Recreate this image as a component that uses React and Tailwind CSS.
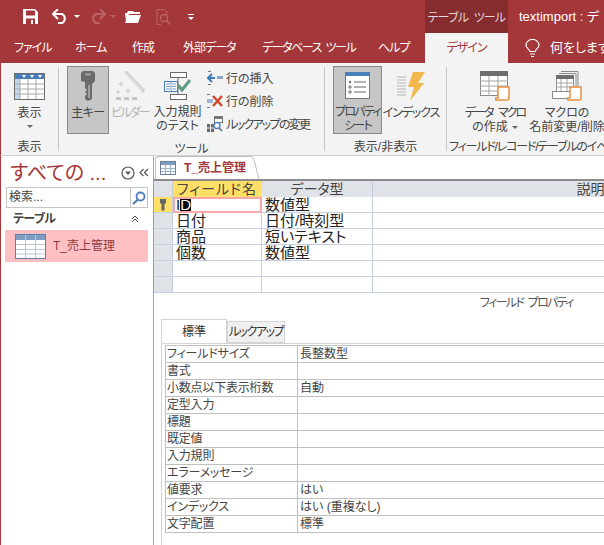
import React from 'react';

const fieldRows = [
  ['ID', '数値型'],
  ['日付', '日付/時刻型'],
  ['商品', '短いテキスト'],
  ['個数', '数値型'],
  ['', ''],
  ['', ''],
];

const propRows = [
  ['フィールドサイズ', '長整数型'],
  ['書式', ''],
  ['小数点以下表示桁数', '自動'],
  ['定型入力', ''],
  ['標題', ''],
  ['既定値', ''],
  ['入力規則', ''],
  ['エラーメッセージ', ''],
  ['値要求', 'はい'],
  ['インデックス', 'はい (重複なし)'],
  ['文字配置', '標準'],
];

const TableIcon = () => (
  <svg width="31" height="27" viewBox="0 0 31 27">
    <rect x="0.5" y="0.5" width="30" height="26" fill="#fff" stroke="#6d6d6d" />
    <rect x="1" y="1" width="29" height="5" fill="#4a7ebb" />
    <rect x="1" y="6" width="5" height="20" fill="#c5d7ee" />
    <path d="M6 6v20M14 6v20M22 6v20M1 11h29M1 16h29M1 21h29" stroke="#a9a9a9" fill="none" />
    <path d="M8 2h4l-2 3zM16 2h4l-2 3zM24 2h4l-2 3z" fill="#fff" />
  </svg>
);

const KeyIcon = () => (
  <svg width="16" height="30" viewBox="0 0 16 30">
    <path d="M3 0h10l2 2v8l-3 3v15l-4 2-3-2v-3l2-2-2-2 2-2-2-2v-6L1 10V2z" fill="#6a6a6a" />
    <rect x="5" y="2" width="6" height="2.5" fill="#9a9a9a" />
    <path d="M9 14v13" stroke="#b5b5b5" strokeWidth="1.5" />
  </svg>
);

const BuilderIcon = () => (
  <svg width="30" height="30" viewBox="0 0 30 30">
    <path d="M9 1l3-1 18 19-2 3z" fill="#c9c9c9" />
    <path d="M10 1l18 19" stroke="#dedede" strokeWidth="2" />
    <path d="M6 10l1 2 2 1-2 1-1 2-1-2-2-1 2-1zM13 17l1 2 2 1-2 1-1 2-1-2-2-1 2-1zM3 19l1 1 1 1-1 1-1 1-1-1-1-1 1-1z" fill="#d2d2d2" />
    <path d="M1 26h5v3H1zM9 26h5v3H9zM17 26h5v3h-5z" fill="#c4c4c4" />
  </svg>
);

const ValidationIcon = () => (
  <svg width="28" height="28" viewBox="0 0 28 28">
    <rect x="6.5" y="0.5" width="16" height="5" fill="#fff" stroke="#6a6a6a" />
    <rect x="6.5" y="22.5" width="16" height="5" fill="#fff" stroke="#6a6a6a" />
    <path d="M14 6v16" stroke="#6a6a6a" />
    <rect x="0.5" y="9.5" width="13" height="10" fill="#fff" stroke="#4a7ebb" />
    <path d="M7 10v9M2 12h4M2 14.500h4M2 17h4M8 12h4M8 14.500h4M8 17h4" stroke="#7c9cc4" />
    <path d="M14 13l4 5 8-10" fill="none" stroke="#5d9c85" strokeWidth="3" />
  </svg>
);

const InsertRowIcon = () => (
  <svg width="16" height="17" viewBox="0 0 16 17">
    <path d="M1 1h3v1H1zM1 14h3v1H1z" fill="#777" />
    <path d="M1 8h7" stroke="#3d78b8" strokeWidth="2" />
    <path d="M5 4L1 8l4 4" fill="none" stroke="#3d78b8" strokeWidth="2" />
    <rect x="10" y="6" width="6" height="3" fill="#8fa6c4" />
  </svg>
);

const DeleteRowIcon = () => (
  <svg width="16" height="17" viewBox="0 0 16 17">
    <path d="M0 1h3v1H0zM0 14h3v1H0z" fill="#777" />
    <rect x="0" y="6" width="6" height="4" fill="#9db5d6" />
    <path d="M6 3l9 10M15 3L6 13" stroke="#d24726" strokeWidth="2.400" />
  </svg>
);

const LookupIcon = () => (
  <svg width="16" height="17" viewBox="0 0 16 17">
    <rect x="7.500" y="0.500" width="8" height="6" fill="#fff" stroke="#777" />
    <rect x="8" y="1" width="7" height="2" fill="#777" />
    <rect x="0" y="8" width="7" height="8" fill="#6a6a6a" />
    <path d="M0 12h7M3.500 8v8" stroke="#eee" />
    <circle cx="10" cy="9.500" r="3" fill="#fff" stroke="#4a7ebb" strokeWidth="1.300" />
    <path d="M12 12l3 3" stroke="#666" strokeWidth="1.600" />
  </svg>
);

const PropertySheetIcon = () => (
  <svg width="25" height="27" viewBox="0 0 25 27">
    <rect x="0.500" y="0.500" width="24" height="26" fill="#fff" stroke="#777" />
    <rect x="0" y="0" width="25" height="4" fill="#4a7ebb" />
    <circle cx="5" cy="10" r="1.200" fill="#666" />
    <circle cx="5" cy="15" r="1.200" fill="none" stroke="#666" />
    <circle cx="5" cy="20" r="1.200" fill="none" stroke="#666" />
    <path d="M9 10h12M9 15h12M9 20h12" stroke="#666" />
  </svg>
);

const IndexIcon = () => (
  <svg width="28" height="29" viewBox="0 0 28 29">
    <path d="M0 5h9M0 8h9M0 11h9M0 14h9M0 17h9M0 20h9M0 23h9" stroke="#b5b5b5" />
    <path d="M16 0h12l-7 11h6L13 29l4-14h-6z" fill="#f2b84b" />
  </svg>
);

const MacroBadge = () => (
  <svg className="absolute right-0 bottom-0" width="15" height="15" viewBox="0 0 15 15">
    <path d="M3 1h11v11a2 2 0 0 1-2 2H1a2 2 0 0 1-1-2h3z" fill="#fff" stroke="#e8913f" strokeWidth="1.500" />
  </svg>
);

const DataMacroIcon = () => (
  <div className="relative w-[30px] h-[30px]">
    <svg width="30" height="28" viewBox="0 0 30 28">
      <rect x="0.500" y="0.500" width="27" height="24" fill="#fff" stroke="#8a8a8a" />
      <rect x="0" y="0" width="28" height="5" fill="#6f6f6f" />
      <path d="M9 5v20M18 5v20M0 10h28M0 15h28M0 20h28" stroke="#a5a5a5" />
    </svg>
    <MacroBadge />
  </div>
);

const RenameMacroIcon = () => (
  <div className="relative w-[30px] h-[30px]">
    <svg width="30" height="28" viewBox="0 0 30 28">
      <path d="M9 .5h17v20M7 2.500h17v20" fill="none" stroke="#8a8a8a" />
      <rect x="4.500" y="4.500" width="17" height="16" fill="#fff" stroke="#8a8a8a" />
      <rect x="4" y="4" width="18" height="4" fill="#6f6f6f" />
      <path d="M9 8v12M15 8v12M4 12h18M4 16h18" stroke="#a5a5a5" />
      <rect x="0.500" y="20.500" width="24" height="7" fill="#fff" stroke="#8a8a8a" />
    </svg>
    <MacroBadge />
  </div>
);

const Caret = ({ className = 'border-t-[#666]' }) => (
  <div className={`w-0 h-0 border-x-[3px] border-t-[3px] border-x-transparent ${className}`} />
);

const RibbonButton = ({ icon, lines, width, active, disabled, caret, labelClass = '' }) => (
  <div
    className={`flex flex-col items-center shrink-0 h-[68px] pt-[4px] border ${
      active ? 'bg-[#c6c6c6] border-[#8a8a8a]' : 'border-transparent'
    } ${disabled ? 'text-[#b1b1b1]' : 'text-[#444]'} ${width}`}
  >
    <div className="h-[30px] flex items-center justify-center">{icon}</div>
    <div className={`mt-[5px] text-center leading-[14px] whitespace-nowrap ${labelClass}`}>
      {lines.map((line, i) => (
        <div key={i}>{line}</div>
      ))}
    </div>
    {caret && <div className="mt-[5px]"><Caret /></div>}
  </div>
);

const CommandRow = ({ icon, label, labelClass = '' }) => (
  <div className="flex items-center h-[23px] gap-[3px] whitespace-nowrap text-[#444]">
    {icon}
    <span className={labelClass}>{label}</span>
  </div>
);

const GroupLabel = ({ children, className = '' }) => (
  <div className={`mt-[6px] h-[14px] leading-[14px] text-[#444] whitespace-nowrap ${className}`}>{children}</div>
);

const Separator = () => <div className="w-px my-[4px] bg-[#c6c6c6] shrink-0" />;

const TitleBar = () => (
  <div className="flex h-[33px] bg-[#a4373a] text-white">
    <div className="flex items-center w-[425px] shrink-0 pl-[23px]">
      <svg width="15" height="15" viewBox="0 0 15 15">
        <path d="M0 0h12l3 3v12H0z" fill="#fff" />
        <rect x="3" y="1.500" width="9" height="5" fill="#a4373a" />
        <rect x="3" y="9.500" width="9" height="5.500" fill="#a4373a" />
        <rect x="8" y="11" width="2" height="4" fill="#fff" />
      </svg>
      <svg className="ml-[14px]" width="18" height="15" viewBox="0 0 18 15">
        <path d="M1 5h9a5 5 0 0 1 0 9H6" fill="none" stroke="#fff" strokeWidth="2" />
        <path d="M6 0L1 5l5 5" fill="none" stroke="#fff" strokeWidth="2" />
      </svg>
      <div className="ml-[4px]"><Caret className="border-t-white" /></div>
      <svg className="ml-[8px]" width="18" height="15" viewBox="0 0 18 15">
        <path d="M17 5H8a5 5 0 0 0 0 9h4" fill="none" stroke="#bb6466" strokeWidth="2" />
        <path d="M12 0l5 5-5 5" fill="none" stroke="#bb6466" strokeWidth="2" />
      </svg>
      <div className="ml-[4px]"><Caret className="border-t-[#bb6466]" /></div>
      <svg className="ml-[9px]" width="16" height="13" viewBox="0 0 16 13">
        <path d="M0 3h2l1-2h5l1 1h6v2H4L1 11zM0 13l3-8h13l-3 8z" fill="#fff" />
      </svg>
      <svg className="ml-[15px]" width="16" height="16" viewBox="0 0 16 16">
        <path d="M1 .500h7l3 3v3M5 15.500H1V.500" fill="none" stroke="#bb6466" />
        <circle cx="8" cy="9" r="3.500" fill="none" stroke="#bb6466" strokeWidth="1.300" />
        <path d="M10.500 11.500l4 4" stroke="#bb6466" strokeWidth="1.600" />
      </svg>
      <div className="ml-[16px] flex flex-col items-center gap-[2px]">
        <div className="w-[6px] h-px bg-white" />
        <Caret className="border-t-white" />
      </div>
    </div>
    <div className="w-[83px] shrink-0 flex items-center justify-center bg-[#842c2e] text-[12px] tracking-[-0.8px] [word-spacing:3px] text-[#e8d5d5] pt-[3px] whitespace-nowrap">
      テーブル ツール
    </div>
    <div className="pl-[11px] flex items-center text-[13px] whitespace-nowrap">textimport : デ</div>
  </div>
);

const TabBar = () => (
  <div className="flex h-[30px] bg-[#a4373a] text-white text-[12px] items-stretch whitespace-nowrap">
    <div className="w-[425px] shrink-0 flex items-center pl-[14px] tracking-[-1px]">
      <span className="w-[61px] shrink-0">ファイル</span>
      <span className="w-[57px] shrink-0">ホーム</span>
      <span className="w-[51px] shrink-0">作成</span>
      <span className="w-[79px] shrink-0">外部データ</span>
      <span className="w-[116px] shrink-0 tracking-[-1.5px] [word-spacing:3px]">データベース ツール</span>
      <span>ヘルプ</span>
    </div>
    <div className="w-[83px] shrink-0 bg-[#f3f3f3] text-[#a4373a] flex items-center justify-center tracking-[-1px]">デザイン</div>
    <div className="flex items-center pl-[17px] gap-[10px]">
      <svg className="shrink-0" width="15" height="18" viewBox="0 0 15 18">
        <path d="M5 12.500C4 10 1 9 1 6a6.500 5.500 0 0 1 13 0c0 3-3 4-4 6.500zM5 15h5M6 17.500h3" fill="none" stroke="#fff" strokeWidth="1.200" />
      </svg>
      <span className="text-[13px]">何をしますか</span>
    </div>
  </div>
);

const Ribbon = () => (
  <div className="flex h-[93px] bg-[#f3f3f3] border-b border-[#d2d2d2] border-l border-l-[#a4373a] text-[12px] overflow-hidden">
    <div className="w-[57px] shrink-0 pt-[3px] flex flex-col items-center">
      <RibbonButton width="w-[50px]" icon={<TableIcon />} lines={['表示']} caret />
      <GroupLabel>表示</GroupLabel>
    </div>
    <Separator />
    <div className="w-[265px] shrink-0 pt-[3px] flex flex-col items-center">
      <div className="flex w-full pl-[8px]">
        <RibbonButton width="w-[42px]" active icon={<KeyIcon />} lines={['主キー']} labelClass="tracking-[-0.5px]" />
        <RibbonButton width="w-[42px]" disabled icon={<BuilderIcon />} lines={['ビルダー']} labelClass="tracking-[-1.8px]" />
        <RibbonButton width="w-[53px]" icon={<ValidationIcon />} lines={['入力規則', 'のテスト']} />
        <div className="ml-[3px] pt-[1px] flex flex-col">
          <CommandRow icon={<InsertRowIcon />} label="行の挿入" />
          <CommandRow icon={<DeleteRowIcon />} label="行の削除" />
          <CommandRow icon={<LookupIcon />} label="ルックアップの変更" labelClass="tracking-[-1.7px]" />
        </div>
      </div>
      <GroupLabel>ツール</GroupLabel>
    </div>
    <Separator />
    <div className="w-[121px] shrink-0 pt-[3px] flex flex-col items-center">
      <div className="flex w-full pl-[8px] gap-[2px]">
        <RibbonButton width="w-[49px]" active icon={<PropertySheetIcon />} lines={['プロパティ', 'シート']} labelClass="tracking-[-1.8px]" />
        <RibbonButton width="w-[54px]" icon={<IndexIcon />} lines={['インデックス']} labelClass="tracking-[-1.1px]" />
      </div>
      <GroupLabel>表示/非表示</GroupLabel>
    </div>
    <Separator />
    <div className="flex-1 min-w-0 pt-[3px] flex flex-col">
      <div className="flex pl-[17px] gap-[5px]">
        <RibbonButton
          width="w-[62px]"
          icon={<DataMacroIcon />}
          lines={[
            <span className="tracking-[-2px] [word-spacing:4px]">データ マクロ</span>,
            <span className="inline-flex items-center gap-[4px]">の作成<Caret /></span>,
          ]}
        />
        <RibbonButton width="w-[72px]" icon={<RenameMacroIcon />} lines={['マクロの', '名前変更/削除']} />
      </div>
      <GroupLabel className="pl-[2px] tracking-[-1.2px]">フィールド/レコード/テーブルのイベ</GroupLabel>
    </div>
  </div>
);

const Sidebar = () => (
  <div className="w-[153px] shrink-0 border-l border-[#a4373a] bg-white flex flex-col">
    <div className="h-[31px] flex items-center pl-[9px] pt-[2px]">
      <span className="text-[20px] leading-[24px] text-[#a4373a] whitespace-nowrap w-[111px]">すべての ...</span>
      <svg width="14" height="14" viewBox="0 0 14 14">
        <circle cx="7" cy="7" r="6" fill="none" stroke="#555" strokeWidth="1.200" />
        <path d="M4 5.500h6l-3 3.500z" fill="#555" />
      </svg>
      <svg className="ml-[4px]" width="10" height="9" viewBox="0 0 10 9">
        <path d="M4.500 1L1 4.500 4.500 8M9 1L5.500 4.500 9 8" fill="none" stroke="#555" strokeWidth="1.200" />
      </svg>
    </div>
    <div className="mx-[5px] h-[21px] flex border border-[#c6c6c6] text-[12px] text-[#444]">
      <div className="flex-1 pl-[2px] leading-[19px]">検索...</div>
      <div className="w-[17px] border-l border-[#c6c6c6] flex items-center justify-center">
        <svg width="14" height="14" viewBox="0 0 14 14">
          <circle cx="8.500" cy="5.500" r="4" fill="none" stroke="#4a7ebb" strokeWidth="1.800" />
          <path d="M6 8.500l-5 4.500" stroke="#4a7ebb" strokeWidth="2.200" />
        </svg>
      </div>
    </div>
    <div className="h-[22px] flex items-center justify-between pl-[12px] pr-[14px] text-[12px] font-bold text-[#444]">
      <span className="tracking-[-0.6px]">テーブル</span>
      <svg width="8" height="8" viewBox="0 0 8 8">
        <path d="M1 4l3-3 3 3M1 7l3-3 3 3" fill="none" stroke="#555" />
      </svg>
    </div>
    <div className="ml-[4px] w-[143px] h-[32px] bg-[#ffc0c4] flex items-center pl-[10px] gap-[7px] text-[12px] text-[#8e3a3c]">
      <svg width="31" height="25" viewBox="0 0 31 25">
        <rect x="0.500" y="0.500" width="30" height="24" fill="#fff" stroke="#5f7fa8" />
        <rect x="1" y="1" width="29" height="5" fill="#7f9cc2" />
        <path d="M10.500 1v23M20.500 1v23M1 10.500h29M1 15.500h29M1 20h29" stroke="#b9c6d8" />
      </svg>
      <span>T_売上管理</span>
    </div>
  </div>
);

const GridHeader = ({ children, active }) => (
  <div className={`h-[16px] flex items-center justify-center border-r text-[14px] leading-[16px] ${active ? 'bg-[#ffdf66] border-[#ffdf66] text-[#444] tracking-[1px]' : 'bg-[#dfe3e8] border-[#c6ccd6] text-[#444]'}`}>
    {children}
  </div>
);

const DesignGrid = () => (
  <div className="w-[655px] border-t-2 border-[#8c8c8c] grid grid-cols-[19px_89px_111px_1fr] text-[15px] text-[#222]">
    <div className="h-[16px] bg-[#dfe3e8] border-r border-[#c6ccd6]" />
    <GridHeader active>フィールド名</GridHeader>
    <GridHeader>データ型</GridHeader>
    <GridHeader>説明</GridHeader>
    {fieldRows.map(([name, type], i) => (
      <React.Fragment key={i}>
        <div className={`h-[16px] border-b border-r border-[#c5cfe2] flex items-center justify-center ${i === 0 ? 'bg-[#ffdf66]' : 'bg-[#dfe3e8]'}`}>
          {i === 0 && (
            <svg width="6" height="12" viewBox="0 0 6 12">
              <path d="M0 0h6v4L4.500 5v6L3 12 1.500 11V5L0 4z" fill="#666" />
            </svg>
          )}
        </div>
        {i === 0 ? (
          <div className="h-[16px] border-2 border-[#f8a8ac] pl-[1px] flex items-center overflow-hidden">
            <span className="leading-[12px]">I</span>
            <span className="leading-[12px] bg-black text-white">D</span>
          </div>
        ) : (
          <div className="h-[16px] border-b border-r border-[#c5cfe2] pl-[3px] flex items-center overflow-hidden leading-[15px]">
            {name}
          </div>
        )}
        <div className="h-[16px] border-b border-r border-[#c5cfe2] pl-[3px] flex items-center overflow-hidden leading-[15px] whitespace-nowrap">{type}</div>
        <div className="h-[16px] border-b border-[#c5cfe2]" />
      </React.Fragment>
    ))}
  </div>
);

const FieldProperties = () => (
  <div className="flex-1 min-h-0 flex flex-col">
    <div className="h-[27px] pl-[326px] pt-[3px] text-[12px] tracking-[-1.7px] [word-spacing:3px] leading-[14px] text-[#555] whitespace-nowrap">
      フィールド プロパティ
    </div>
    <div className="flex items-end pl-[7px] h-[23px] text-[12px] text-[#333]">
      <div className="w-[66px] h-[24px] border border-b-0 border-[#d4d4d4] bg-white flex items-center justify-center">標準</div>
      <div className="w-[58px] h-[22px] border border-[#d4d4d4] bg-[#f0f0f0] flex items-center justify-center whitespace-nowrap tracking-[-1.5px]">ルックアップ</div>
    </div>
    <div className="ml-[7px] flex-1 min-h-0 border-l border-t border-[#d4d4d4] pl-[3px] pt-[1px]">
      <div className="w-[520px] border border-[#c0c0c0] border-b-0 text-[12px] text-[#444]">
        {propRows.map(([label, value]) => (
          <div key={label} className="grid grid-cols-[132px_1fr] h-[17px] border-b border-[#c0c0c0] leading-[16px]">
            <div className="pl-[1px] border-r border-[#c0c0c0] whitespace-nowrap tracking-[-0.2px]">{label}</div>
            <div className="pl-[2px] whitespace-nowrap">{value}</div>
          </div>
        ))}
      </div>
    </div>
  </div>
);

const DocumentArea = () => (
  <div className="flex-1 min-w-0 border-l border-[#a0a0a0] flex flex-col overflow-hidden">
    <div className="h-[23px] pl-[1px] flex items-end">
      <div className="relative w-[97px] h-[23px] flex items-center gap-[8px] pl-[4px] border-t border-l border-[#c0c0c0] rounded-tl-[4px] text-[12px] font-bold text-[#a4373a]">
        <svg width="16" height="14" viewBox="0 0 16 14">
          <rect x="0.500" y="0.500" width="15" height="13" fill="#fff" stroke="#6d7f99" />
          <rect x="1" y="1" width="14" height="3" fill="#7f9cc2" />
          <path d="M5.500 4v9M10.500 4v9M1 7.500h14M1 10.500h14" stroke="#9db0c9" />
        </svg>
        <span className="whitespace-nowrap">T_売上管理</span>
        <svg className="absolute right-[-8px] top-[-1px]" width="10" height="24" viewBox="0 0 10 24">
          <path d="M0 .500h1Q3 .500 4 4l5 19" fill="none" stroke="#c0c0c0" />
        </svg>
      </div>
    </div>
    <DesignGrid />
    <FieldProperties />
  </div>
);

export default function App() {
  return (
    <div
      className="w-[604px] h-[545px] overflow-hidden bg-white flex flex-col [font-feature-settings:'palt']"
      style={{ fontFamily: '"Liberation Sans", "Noto Sans CJK JP", sans-serif' }}
    >
      <TitleBar />
      <TabBar />
      <Ribbon />
      <div className="flex flex-1 min-h-0">
        <Sidebar />
        <DocumentArea />
      </div>
    </div>
  );
}
